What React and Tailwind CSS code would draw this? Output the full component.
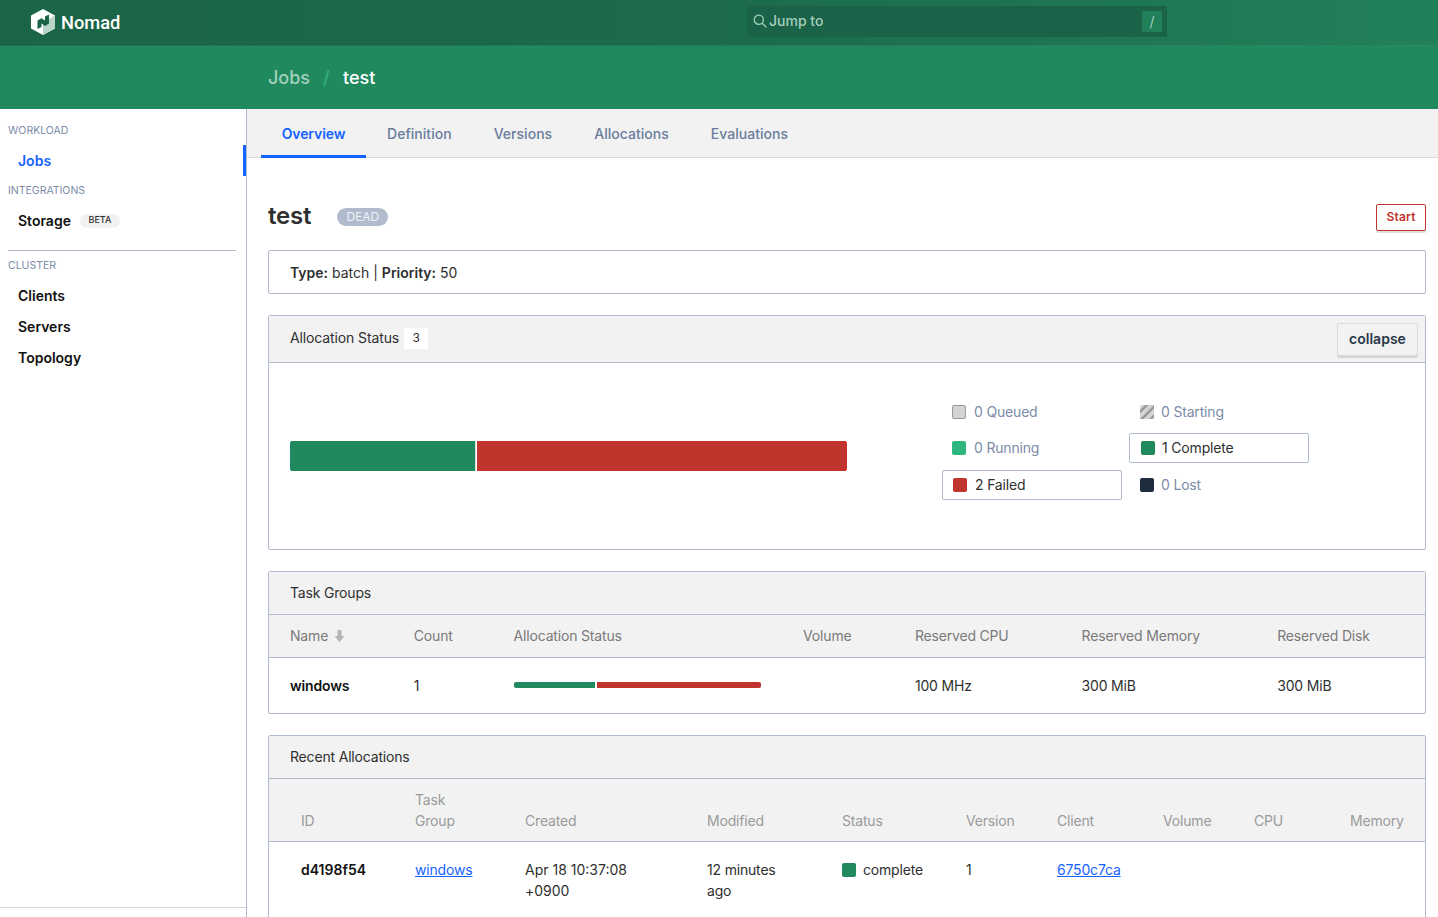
import React from "react";

const allocColumns = [
  ["ID", "w-[125px] pl-[11px]"],
  ["Task Group", "w-[110px]"],
  ["Created", "w-[182px]"],
  ["Modified", "w-[135px]"],
  ["Status", "w-[124px]"],
  ["Version", "w-[91px]"],
  ["Client", "w-[106px]"],
  ["Volume", "w-[91px]"],
  ["CPU", "w-[96px]"],
  ["Memory", "w-[53px]"],
];

const groupColumns = [
  ["Count", "w-[100px]"],
  ["Allocation Status", "w-[290px]"],
  ["Volume", "w-[112px]"],
  ["Reserved CPU", "w-[167px]"],
  ["Reserved Memory", "w-[196px]"],
  ["Reserved Disk", "w-[148px]"],
];

function Logo() {
  return (
    <svg width="24" height="26" viewBox="0 0 24 26" className="shrink-0">
      <path d="M12 0 L24 6.5 V19.5 L12 26 L0 19.5 V6.5 Z" fill="#ffffff" />
      <path d="M12 13.5 L24 6.5 V19.5 L12 26 Z" fill="#b9d3c8" />
      <path d="M6.5 20 V11.5 L10.5 9.2 L14 11.5 V7.5 L18 5.5 V14.5 L14 17 L10.5 14.5 V18 Z" fill="#1b6448" />
    </svg>
  );
}

function LegendItem({ color, count, label, active, striped, pad, extra }) {
  return (
    <div className={(active ? "w-[180px] h-[30px] flex items-center border border-[#b0bccd] rounded-[2px] text-[#2f2f2f] " : "w-[180px] h-[30px] flex items-center border border-transparent text-[#7c8ca8] ") + pad + " " + (extra || "")}>
      {striped ? (
        <svg width="14" height="14" viewBox="0 0 14 14" className="shrink-0">
          <rect width="14" height="14" rx="1" fill="#d4d4d4" />
          <path d="M0 5 L5 0 H8.5 L0 8.5 Z M0 14 L14 0 V3.5 L3.5 14 Z M9 14 L14 9 V12.5 L12.5 14 Z" fill="#9a9a9a" />
        </svg>
      ) : (
        <span className={"w-[14px] h-[14px] rounded-[2px] shrink-0 " + color}></span>
      )}
      <span className="text-sm leading-none">{count} {label}</span>
    </div>
  );
}

function Nav({ children, active }) {
  return (
    <div className={active ? "h-[31px] flex items-center pl-[18px] text-sm font-semibold text-[#1563ff] border-r-[3px] border-[#1563ff]" : "h-[31px] flex items-center pl-[18px] text-sm font-semibold text-[#111111]"}>
      {children}
    </div>
  );
}

export default function App() {
  return (
    <div className="h-[917px] overflow-hidden bg-white text-[#2f2f2f] text-sm font-['Inter',sans-serif]">
      <div className="h-[46px] flex items-center bg-[linear-gradient(90deg,#1b6448_0%,#1b6b4c_50%,#21805a_100%)] shadow-[inset_0_-1px_0_rgba(255,255,255,0.06)]">
        <div className="w-[747px] flex items-center pl-[31px] gap-[6px] pb-[2px]">
          <Logo />
          <span className="font-['Roboto',sans-serif] text-[18.3px] font-medium text-white mt-[2px]">Nomad</span>
        </div>
        <div className="w-[420px] h-[31px] mb-[3px] flex items-center justify-between pl-[6px] pr-[5px] rounded-[2px] bg-[#1a6348]">
          <div className="flex items-center gap-[2px] pb-[1px] text-[#a5cfbe] text-sm font-medium">
            <svg width="14" height="14" viewBox="0 0 14 14" fill="none" stroke="#a5cfbe" strokeWidth="1.3">
              <circle cx="5.8" cy="5.8" r="4.6" />
              <path d="M9.2 9.2 L13.4 13.4" />
            </svg>
            Jump to
          </div>
          <span className="w-5 h-[21px] flex items-center justify-center bg-[#21805a] text-[#a5cfbe] text-sm">/</span>
        </div>
      </div>

      <div className="h-[63px] flex items-center pl-[268px] bg-[#21895e] text-lg font-medium">
        <span className="text-[#a2d0bd]">Jobs</span>
        <span className="ml-[13px] mr-[13.4px] text-[#2fb27f]">/</span>
        <span className="text-white">test</span>
      </div>

      <div className="flex h-[808px]">
        <aside className="w-[247px] shrink-0 border-r border-[#b0bccd] flex flex-col pb-[9px]">
          <div className="flex-1 pt-[15px] border-b border-[#d3d3df]">
            <p className="pl-2 text-[10.5px] leading-[13px] text-[#7c8ca8] mb-[8px]">WORKLOAD</p>
            <Nav active>Jobs</Nav>
            <p className="pl-2 mt-[8px] text-[10.5px] leading-[13px] text-[#7c8ca8] mb-[8px]">INTEGRATIONS</p>
            <Nav>
              Storage
              <span className="ml-[9px] w-[40px] h-[14px] flex items-center justify-center rounded-full bg-[#f2f2f2] text-[9px] font-medium text-[#2f2f2f]">BETA</span>
            </Nav>
            <div className="mt-[14px] ml-2 mr-[10px] border-t border-[#b0bccd]"></div>
            <p className="pl-2 mt-[8px] text-[10.5px] leading-[13px] text-[#7c8ca8] mb-[8px]">CLUSTER</p>
            <Nav>Clients</Nav>
            <Nav>Servers</Nav>
            <Nav>Topology</Nav>
          </div>
        </aside>

        <main className="flex-1 min-w-0 tracking-[-0.18px]">
          <div className="h-[49px] flex pl-[14px] bg-[#f2f2f2] border-b border-[#d9d9d9] text-sm font-medium text-[#6a7c9c] tracking-[0.03px]">
            <div className="h-[49px] w-[105px] flex items-center justify-center font-semibold text-[#1563ff] border-b-[3px] border-[#1563ff] pt-[3px] tracking-[-0.1px]">Overview</div>
            <div className="h-[49px] flex items-center px-[21px]">Definition</div>
            <div className="h-[49px] flex items-center px-[21px]">Versions</div>
            <div className="h-[49px] flex items-center px-[21px]">Allocations</div>
            <div className="h-[49px] flex items-center px-[21px]">Evaluations</div>
          </div>

          <div className="pl-[21px] pr-3">
            <div className="h-[92px] flex items-center justify-between">
              <div className="flex items-center mt-[23px] mb-0">
                <h1 className="text-[24px] font-semibold text-[#2f2f2f] leading-none">test</h1>
                <span className="ml-[26px] w-[51px] h-[18px] mt-[2px] flex items-center justify-center rounded-full bg-[#b0bccd] text-xs text-[#eef1f5] tracking-normal">DEAD</span>
              </div>
              <button className="mt-[26px] w-[50px] h-[27px] flex items-center justify-center border border-[#c1342e] rounded-[2px] bg-white text-xs font-semibold text-[#c1342e] tracking-[0.2px] shadow-[0_2px_0_rgba(0,0,0,0.12)]">Start</button>
            </div>

            <div className="h-[44px] flex items-center pl-[21px] pt-[2px] border border-[#b0bccd] rounded-[2px] tracking-normal">
              <strong className="font-semibold">Type:</strong>&nbsp;batch |&nbsp;<strong className="font-semibold">Priority:</strong>&nbsp;50
            </div>

            <section className="mt-[21px] h-[235px] border border-[#b0bccd] rounded-[2px]">
              <div className="h-[47px] flex items-center justify-between pl-[21px] pr-[7px] bg-[#f2f2f2] border-b border-[#b0bccd]">
                <div className="flex items-center gap-[5px] pb-[2px] tracking-[-0.12px]">
                  Allocation Status
                  <span className="w-[24px] h-[21px] flex items-center justify-center bg-white text-xs">3</span>
                </div>
                <button className="w-[81px] h-[33px] flex items-center justify-center border border-[#dadada] rounded-[2px] bg-[#f2f2f2] font-semibold text-[#283647] tracking-normal shadow-[0_2px_0_rgba(0,0,0,0.12)]">collapse</button>
              </div>
              <div className="flex pl-[21px] pt-[34px]">
                <div className="w-[557px] h-[30px] mt-[44px] flex rounded-[2px] overflow-hidden shrink-0">
                  <div className="w-[186px] bg-[#21895e] border-r border-[#d9d9d9]"></div>
                  <div className="flex-1 bg-[#c1342e] border-l border-white"></div>
                </div>
                <div className="ml-[95px] grid grid-cols-[187px_180px] gap-y-[7px] items-start">
                  <LegendItem pad="pl-[9px] gap-2" extra="mb-[-1px]" color="bg-[#d4d4d4] border border-[#9a9a9a]" count={0} label="Queued" />
                  <LegendItem pad="pl-[10px] gap-[7px]" extra="mb-[-1px]" striped count={0} label="Starting" />
                  <LegendItem pad="pl-[9px] gap-2" color="bg-[#2eb67f]" count={0} label="Running" />
                  <LegendItem pad="pl-[11px] gap-[7px]" active color="bg-[#21895e]" count={1} label="Complete" />
                  <LegendItem pad="pl-[10px] gap-2" active color="bg-[#c1342e]" count={2} label="Failed" />
                  <LegendItem pad="pl-[10px] gap-[7px]" color="bg-[#1e2d3d]" count={0} label="Lost" />
                </div>
              </div>
            </section>

            <section className="mt-[21px] border border-[#b0bccd] rounded-[2px]">
              <div className="h-[43px] flex items-center pl-[21px] bg-[#f2f2f2] border-b border-[#b0bccd]">Task Groups</div>
              <div className="h-[43px] flex items-center pl-[21px] bg-[#f2f2f2] border-b border-[#b0bccd] text-[#7a7a7a]">
                <div className="w-[124px] flex items-center gap-[6px]">
                  Name
                  <svg width="11" height="12" viewBox="0 0 11 12" fill="#b5b5b5">
                    <path d="M3.5 0 H7.5 V6 H10.5 L5.5 12 L0.5 6 H3.5 Z" />
                  </svg>
                </div>
                {groupColumns.map(([name, w]) => (
                  <div key={name} className={w}>{name}</div>
                ))}
              </div>
              <div className="h-[55px] flex items-center pl-[21px]">
                <div className="w-[124px] font-semibold text-[#111111]">windows</div>
                <div className="w-[100px]">1</div>
                <div className="w-[290px]">
                  <div className="w-[247px] h-[6px] mb-[1px] flex rounded-[2px] overflow-hidden">
                    <div className="w-[82px] bg-[#21895e] border-r border-white"></div>
                    <div className="flex-1 bg-[#c1342e] border-l border-white"></div>
                  </div>
                </div>
                <div className="w-[112px]"></div>
                <div className="w-[167px]">100 MHz</div>
                <div className="w-[196px]">300 MiB</div>
                <div className="w-[148px]">300 MiB</div>
              </div>
            </section>

            <section className="mt-[21px] border border-[#b0bccd] rounded-[2px]">
              <div className="h-[43px] flex items-center pl-[21px] bg-[#f2f2f2] border-b border-[#b0bccd]">Recent Allocations</div>
              <div className="h-[63px] flex items-end pb-[10px] pl-[21px] bg-[#f2f2f2] border-b border-[#b0bccd] text-[#9a9a9a] leading-[21px]">
                {allocColumns.map(([name, w]) => (
                  <div key={name} className={w + " shrink-0"}>
                    {name === "Task Group" ? <>Task<br />Group</> : name}
                  </div>
                ))}
              </div>
              <div className="flex pt-[17px] pb-[40px] pl-[21px] leading-[21px]">
                <div className="w-[125px] pl-[11px] shrink-0 font-semibold text-[#111111] tracking-normal">d4198f54</div>
                <div className="w-[110px] shrink-0 text-[#1563ff] underline">windows</div>
                <div className="w-[182px] shrink-0 pr-[50px] tracking-normal">Apr 18 10:37:08 +0900</div>
                <div className="w-[135px] shrink-0 pr-[40px]">12 minutes ago</div>
                <div className="w-[124px] shrink-0 flex items-start gap-[7px]">
                  <span className="w-[14px] h-[14px] mt-[4px] rounded-[2px] bg-[#21895e]"></span>
                  complete
                </div>
                <div className="w-[91px] shrink-0">1</div>
                <div className="w-[106px] shrink-0 text-[#1563ff] underline">6750c7ca</div>
              </div>
            </section>
          </div>
        </main>
      </div>
    </div>
  );
}
